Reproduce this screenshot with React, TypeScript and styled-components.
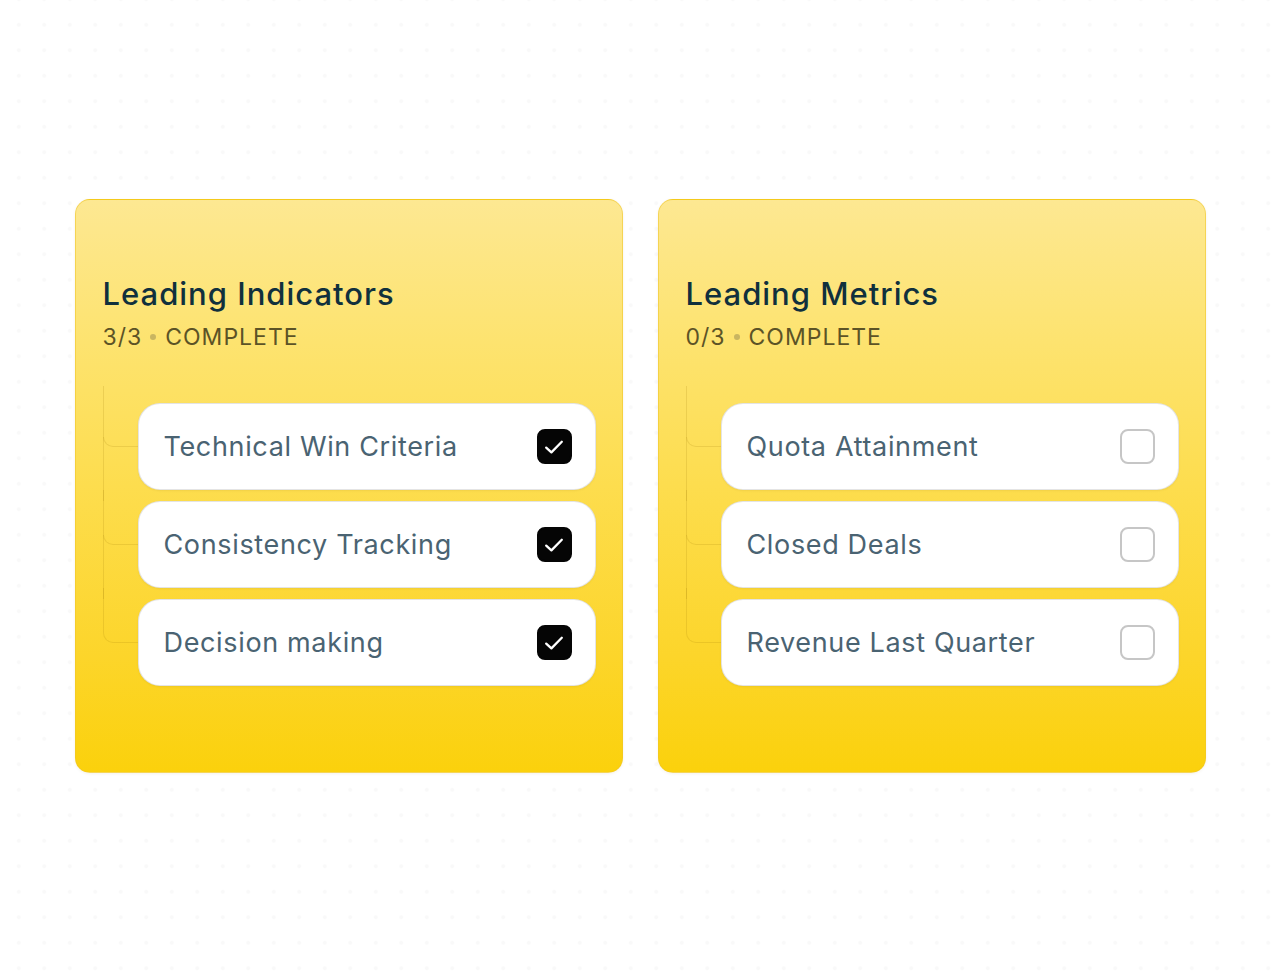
import styled, { createGlobalStyle } from 'styled-components';

const GlobalStyle = createGlobalStyle`
  html, body {
    margin: 0;
    padding: 0;
    background: #ffffff;
  }
  body {
    font-family: Inter, "Noto Sans", "Liberation Sans", sans-serif;
    -webkit-font-smoothing: antialiased;
  }
`;

interface Item {
  label: string;
  done: boolean;
}

interface Group {
  title: string;
  items: Item[];
}

const groups: Group[] = [
  {
    title: 'Leading Indicators',
    items: [
      { label: 'Technical Win Criteria', done: true },
      { label: 'Consistency Tracking', done: true },
      { label: 'Decision making', done: true },
    ],
  },
  {
    title: 'Leading Metrics',
    items: [
      { label: 'Quota Attainment', done: false },
      { label: 'Closed Deals', done: false },
      { label: 'Revenue Last Quarter', done: false },
    ],
  },
];

export default function App() {
  return (
    <>
      <GlobalStyle />
      <Page>
        <Cards>
          {groups.map((g) => {
            const count = g.items.filter((i) => i.done).length;
            return (
              <Card key={g.title}>
                <Title>{g.title}</Title>
                <Progress>
                  {count}/{g.items.length}
                  <Dot />
                  COMPLETE
                </Progress>
                <Tree>
                  {g.items.map((item) => (
                    <Row key={item.label}>
                      <Branch />
                      <ItemBox>
                        <ItemLabel>{item.label}</ItemLabel>
                        <Check $done={item.done}>
                          {item.done && (
                            <svg width="24" height="24" viewBox="0 0 24 24" fill="none">
                              <path
                                d="M4.2 12.6 L9.4 17.4 L19.8 6.8"
                                stroke="#fff"
                                strokeWidth="2.3"
                                strokeLinecap="round"
                                strokeLinejoin="round"
                              />
                            </svg>
                          )}
                        </Check>
                      </ItemBox>
                    </Row>
                  ))}
                </Tree>
              </Card>
            );
          })}
        </Cards>
      </Page>
    </>
  );
}

const Page = styled.div`
  min-height: 972px;
  box-sizing: border-box;
  padding-top: 199px;
  background-color: #ffffff;
  background-image: radial-gradient(circle, rgba(0, 0, 0, 0.025) 1.6px, transparent 2.2px);
  background-size: 25.5px 25.5px;
  background-position: 6px 12px;
`;

const Cards = styled.div`
  display: flex;
  justify-content: center;
  gap: 35px;
`;

const Card = styled.div`
  width: 548px;
  box-sizing: border-box;
  padding: 76px 26px 86px 27px;
  border-radius: 15px;
  border: 1px solid rgba(238, 196, 40, 0.55);
  background: linear-gradient(180deg, #fde892 0%, #fde36f 25%, #fddd4e 50%, #fcd52a 80%, #fbd10c 100%);
  box-shadow: 0 1px 3px rgba(120, 90, 0, 0.08);
`;

const Title = styled.h2`
  margin: 0;
  font-size: 31px;
  line-height: 36px;
  font-weight: 550;
  color: #10303d;
  letter-spacing: 1px;
`;

const Progress = styled.div`
  display: flex;
  align-items: center;
  margin-top: 10px;
  font-size: 23px;
  line-height: 30px;
  font-weight: 400;
  color: #5c5326;
  letter-spacing: 1px;
`;

const Dot = styled.span`
  width: 6px;
  height: 6px;
  border-radius: 50%;
  background: #c9b560;
  margin: 0 9px 0 8px;
`;

const Tree = styled.div`
  display: flex;
  flex-direction: column;
  gap: 11px;
  margin-top: 51px;
`;

const Row = styled.div`
  display: flex;
  align-items: stretch;

  &:first-child > span::before {
    top: -17px;
    height: calc(50% + 17px);
  }

  &:last-child > span::after {
    display: none;
  }
`;

const line = 'rgba(150, 110, 0, 0.16)';

const Branch = styled.span`
  position: relative;
  width: 35px;
  flex-shrink: 0;

  &::before {
    content: '';
    position: absolute;
    left: 0;
    right: 0;
    top: -11px;
    height: calc(50% + 11px);
    border-left: 1.5px solid ${line};
    border-bottom: 1.5px solid ${line};
    border-bottom-left-radius: 10px;
    box-sizing: border-box;
  }

  &::after {
    content: '';
    position: absolute;
    left: 0;
    top: calc(50% - 10px);
    bottom: -11px;
    border-left: 1.5px solid ${line};
  }
`;

const ItemBox = styled.div`
  flex: 1;
  height: 87px;
  box-sizing: border-box;
  display: flex;
  align-items: center;
  justify-content: space-between;
  padding: 0 23px 0 25px;
  background: #ffffff;
  border-radius: 22px;
  border: 1.5px solid rgba(225, 225, 225, 0.9);
  box-shadow: 0 1px 2px rgba(100, 80, 0, 0.08);
`;

const ItemLabel = styled.span`
  font-size: 27px;
  font-weight: 400;
  color: #4a6372;
  letter-spacing: 0.65px;
`;

const Check = styled.span<{ $done: boolean }>`
  width: 35px;
  height: 35px;
  box-sizing: border-box;
  border-radius: 8px;
  display: flex;
  align-items: center;
  justify-content: center;
  background: ${(p) => (p.$done ? '#050505' : '#ffffff')};
  border: 2px solid ${(p) => (p.$done ? '#050505' : '#c6c6c6')};
`;
